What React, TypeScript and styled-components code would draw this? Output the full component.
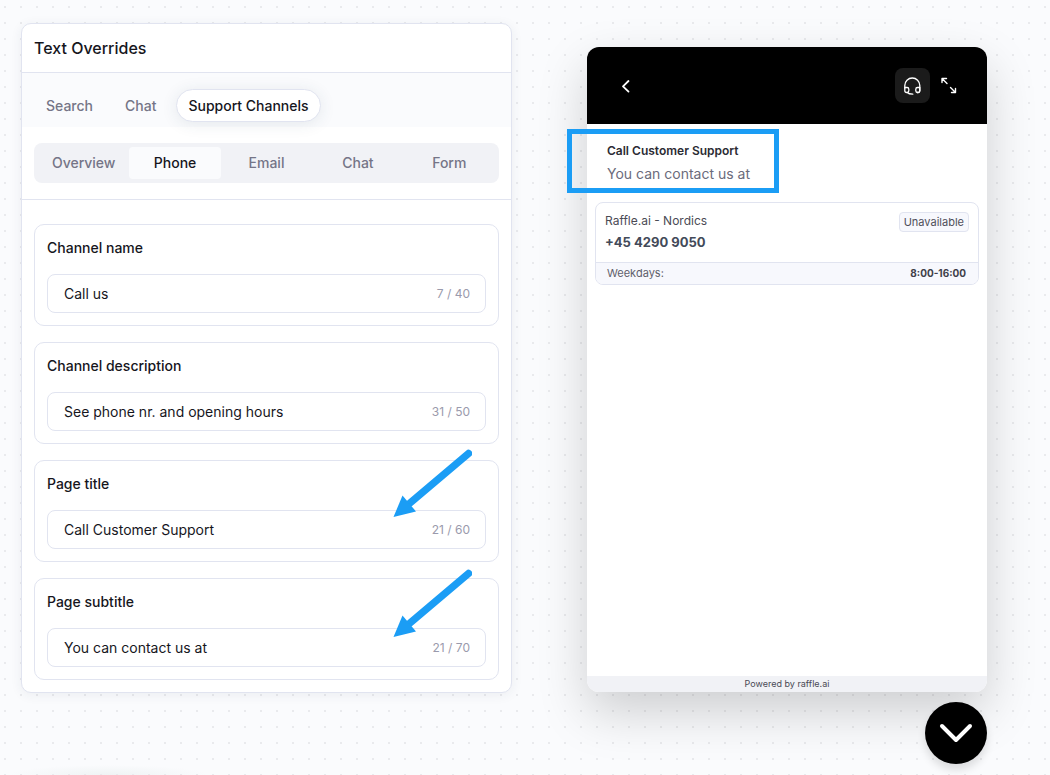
import React, { useState } from 'react';
import styled, { createGlobalStyle } from 'styled-components';

const color = {
  ink: '#16161d',
  muted: '#757587',
  faint: '#9a9aac',
  line: '#e1e4f0',
  canvas: '#fafbfd',
  track: '#f1f2f6',
  accent: '#1b9df5',
};

const GlobalStyle = createGlobalStyle`
  * { box-sizing: border-box; }
  body {
    margin: 0;
    font-family: Inter, "Liberation Sans", sans-serif;
    color: ${color.ink};
    background-color: ${color.canvas};
  }
  button, input { font: inherit; color: inherit; }
`;

const Page = styled.main`
  display: flex;
  align-items: flex-start;
  gap: 75px;
  min-height: 100vh;
  padding: 23px 63px 11px 21px;
  background:
    conic-gradient(from 270deg at 2px 2px, #e9eaed 90deg, transparent 0) 4px 6px / 16px 16px,
    radial-gradient(100px 10px at 108px 100%, #eff3f4, transparent),
    ${color.canvas};
`;

const Panel = styled.section`
  flex: 1 1 0;
  min-width: 0;
  background: #fff;
  border: 1px solid ${color.line};
  border-radius: 10px;
  box-shadow: 0 2px 12px rgba(40, 60, 80, 0.07);
`;

const PanelTitle = styled.h1`
  margin: 0;
  padding: 12px;
  font-size: 16px;
  line-height: 24px;
  font-weight: 500;
  border-bottom: 1px solid ${color.line};
`;

const PillBar = styled.nav`
  display: flex;
  padding: 16px 12px 5px;
  background: ${color.canvas};
`;

const Pill = styled.button<{ $active: boolean }>`
  height: 33px;
  padding: 0 11px;
  margin-right: 8px;
  border: 1px solid ${p => (p.$active ? color.line : 'transparent')};
  border-radius: 17px;
  background: ${p => (p.$active ? '#fff' : 'transparent')};
  box-shadow: ${p => (p.$active ? '0 2px 16px rgba(40, 70, 90, 0.1)' : 'none')};
  color: ${p => (p.$active ? color.ink : color.muted)};
  font-size: 14px;
  font-weight: 500;
`;

const SegmentArea = styled.div`
  padding: 16px 12px;
  border-bottom: 1px solid ${color.line};
`;

const Segments = styled.div`
  display: grid;
  grid-template-columns: repeat(5, 1fr);
  padding: 4px;
  border-radius: 8px;
  background: ${color.track};
`;

const Segment = styled.button<{ $active: boolean }>`
  height: 32px;
  padding: 0 0 2px;
  border: 0;
  border-radius: 4px;
  background: ${p => (p.$active ? color.canvas : 'transparent')};
  color: ${p => (p.$active ? color.ink : color.muted)};
  font-size: 14px;
  font-weight: 500;
`;

const Form = styled.form`
  display: grid;
  gap: 16px;
  padding: 24px 12px 12px;
`;

const Field = styled.div`
  position: relative;
  padding: 11px 12px 12px;
  border: 1px solid ${color.line};
  border-radius: 10px;
`;

const Label = styled.label`
  display: block;
  margin-bottom: 14px;
  font-size: 14px;
  line-height: 24px;
  font-weight: 500;
`;

const InputBox = styled.div`
  display: flex;
  align-items: center;
  height: 39px;
  padding: 0 15px 0 16px;
  border: 1px solid ${color.line};
  border-radius: 8px;
`;

const TextInput = styled.input`
  flex: 1;
  min-width: 0;
  padding: 0;
  border: 0;
  outline: 0;
  background: transparent;
  font-size: 14px;
`;

const Counter = styled.span`
  color: ${color.faint};
  font-size: 12px;
`;

const ArrowSvg = styled.svg<{ $top: number }>`
  position: absolute;
  right: 26px;
  top: ${p => p.$top}px;
  pointer-events: none;
`;

const Preview = styled.aside`
  display: flex;
  flex: 0 0 400px;
  flex-direction: column;
  align-items: flex-end;
  gap: 10px;
  padding-top: 24px;
`;

const Widget = styled.section`
  position: relative;
  display: flex;
  flex-direction: column;
  width: 100%;
  min-height: 645px;
  border-radius: 12px;
  background: #fff;
  box-shadow: 0 20px 50px rgba(0, 0, 0, 0.18);
`;

const WidgetBar = styled.header`
  display: flex;
  align-items: center;
  gap: 2px;
  height: 77px;
  padding: 0 20px;
  border-radius: 12px 12px 0 0;
  background: #000;
  color: #fff;
`;

const IconButton = styled.button<{ $filled?: boolean; $first?: boolean }>`
  display: grid;
  place-items: center;
  width: 35px;
  height: 35px;
  padding: 0;
  border: 0;
  border-radius: 8px;
  background: ${p => (p.$filled ? '#1b1b1b' : 'transparent')};
  color: #fff;
  margin-right: ${p => (p.$first ? 'auto' : '0')};
`;

const WidgetBody = styled.div`
  flex: 1;
  padding: 16px 8px;
`;

const Intro = styled.div`
  padding: 0 12px;
  margin-bottom: 16px;
`;

const IntroTitle = styled.h2`
  margin: 0;
  font-size: 12px;
  line-height: 22px;
  font-weight: 600;
  color: #2b2b33;
`;

const IntroText = styled.p`
  margin: 0;
  font-size: 14px;
  line-height: 24px;
  color: #6b6b7b;
`;

const Highlight = styled.div`
  position: absolute;
  left: -20px;
  top: 82px;
  width: 212px;
  height: 64px;
  border: 5px solid ${color.accent};
  pointer-events: none;
`;

const ContactCard = styled.article`
  border: 1px solid ${color.line};
  border-radius: 8px;
  overflow: hidden;
`;

const ContactMain = styled.div`
  display: flex;
  align-items: flex-start;
  justify-content: space-between;
  padding: 7px 9px 9px;
`;

const ContactName = styled.div`
  font-size: 12px;
  line-height: 21px;
  color: #4b4b55;
`;

const ContactNumber = styled.div`
  font-size: 13px;
  line-height: 22px;
  font-weight: 700;
  color: #434a59;
`;

const Badge = styled.span`
  margin-top: 2px;
  padding: 0 4px;
  border: 1px solid ${color.line};
  border-radius: 4px;
  background: #f7f8fd;
  color: #4f4f5a;
  font-size: 11px;
  line-height: 18px;
`;

const Hours = styled.div`
  display: flex;
  justify-content: space-between;
  padding: 0 12px 0 11px;
  border-top: 1px solid ${color.line};
  background: #f7f8fd;
  color: #5f5f6b;
  font-size: 11px;
  line-height: 21px;
`;

const HoursValue = styled.strong`
  font-size: 10px;
  font-weight: 700;
  color: #3f3f49;
`;

const WidgetFooter = styled.footer`
  height: 16px;
  border-radius: 0 0 12px 12px;
  background: ${color.track};
  color: #4a4a55;
  font-size: 9px;
  line-height: 16px;
  text-align: center;
`;

const Launcher = styled.button`
  position: relative;
  display: grid;
  place-items: center;
  width: 62px;
  height: 62px;
  padding: 0;
  border: 0;
  border-radius: 50%;
  background: #000;
  color: #fff;
  box-shadow: 0 6px 8px rgba(0, 0, 0, 0.12);
`;

const Arrow = ({ top }: { top: number }) => (
  <ArrowSvg $top={top} width="80" height="70" viewBox="0 0 80 70" aria-hidden="true">
    <path d="M76.5 4.5 18 54" stroke={color.accent} strokeWidth="7.4" strokeLinecap="round" />
    <path d="M1.5 68 10.500 46.500 24 62.500Z" fill={color.accent} />
  </ArrowSvg>
);

const fields = [
  { id: 'channel-name', label: 'Channel name', value: 'Call us', max: 40 },
  { id: 'channel-description', label: 'Channel description', value: 'See phone nr. and opening hours', max: 50 },
  { id: 'page-title', label: 'Page title', value: 'Call Customer Support', max: 60, arrow: -12 },
  { id: 'page-subtitle', label: 'Page subtitle', value: 'You can contact us at', max: 70, arrow: -10 },
];

export default function App() {
  const [values, setValues] = useState<Record<string, string>>(
    Object.fromEntries(fields.map(f => [f.id, f.value])),
  );
  const [section, setSection] = useState('Support Channels');
  const [channel, setChannel] = useState('Phone');

  return (
    <>
      <GlobalStyle />
      <Page>
        <Panel>
          <PanelTitle>Text Overrides</PanelTitle>
          <PillBar>
            {['Search', 'Chat', 'Support Channels'].map(name => (
              <Pill key={name} $active={name === section} onClick={() => setSection(name)}>{name}</Pill>
            ))}
          </PillBar>
          <SegmentArea>
            <Segments>
              {['Overview', 'Phone', 'Email', 'Chat', 'Form'].map(name => (
                <Segment key={name} $active={name === channel} onClick={() => setChannel(name)}>{name}</Segment>
              ))}
            </Segments>
          </SegmentArea>
          <Form>
            {fields.map(f => (
              <Field key={f.id}>
                <Label htmlFor={f.id}>{f.label}</Label>
                <InputBox>
                  <TextInput
                    id={f.id}
                    value={values[f.id]}
                    maxLength={f.max}
                    onChange={e => setValues({ ...values, [f.id]: e.target.value })}
                  />
                  <Counter>{values[f.id].length} / {f.max}</Counter>
                </InputBox>
                {f.arrow !== undefined && <Arrow top={f.arrow} />}
              </Field>
            ))}
          </Form>
        </Panel>

        <Preview>
          <Widget>
            <WidgetBar>
              <IconButton $first aria-label="Back">
                <svg width="16" height="16" viewBox="0 0 16 16" fill="none" stroke="currentColor" strokeWidth="1.8" strokeLinecap="round" strokeLinejoin="round">
                  <path d="M11.500 3 6 8.300l5.500 5.300" />
                </svg>
              </IconButton>
              <IconButton $filled aria-label="Support">
                <svg width="18" height="18" viewBox="0 0 18 18" fill="none" stroke="currentColor" strokeWidth="1.3" strokeLinecap="round" strokeLinejoin="round">
                  <path d="M.8 11V8.500a7.500 7.500 0 0 1 15 0V14c0 .9-.6 1.500-1.500 1.500h-1.200" />
                  <path d="M.8 10.500h2.300c1 0 1.700.7 1.700 1.700v1.600c0 1-.7 1.700-1.700 1.700h-.6c-1 0-1.700-.7-1.700-1.700z" />
                  <path d="M15.800 10.500h-2.300c-1 0-1.700.7-1.700 1.700v1.600c0 1 .7 1.700 1.700 1.700h.6c1 0 1.700-.7 1.700-1.700z" />
                  <path d="M3.300 15.500c1 1.200 2.500 1.700 5.500 1.700" />
                </svg>
              </IconButton>
              <IconButton aria-label="Expand">
                <svg width="18" height="18" viewBox="0 0 18 18" fill="none" stroke="currentColor" strokeWidth="1.4" strokeLinecap="round" strokeLinejoin="round">
                  <path d="M6 6.500 1 1.500M1 5.500v-4h4.500M9.500 10.500l5 5M14.500 11.500v4h-4" />
                </svg>
              </IconButton>
            </WidgetBar>
            <WidgetBody>
              <Intro>
                <IntroTitle>{values['page-title']}</IntroTitle>
                <IntroText>{values['page-subtitle']}</IntroText>
              </Intro>
              <ContactCard>
                <ContactMain>
                  <div>
                    <ContactName>Raffle.ai - Nordics</ContactName>
                    <ContactNumber>+45 4290 9050</ContactNumber>
                  </div>
                  <Badge>Unavailable</Badge>
                </ContactMain>
                <Hours>
                  <span>Weekdays:</span>
                  <HoursValue>8:00-16:00</HoursValue>
                </Hours>
              </ContactCard>
            </WidgetBody>
            <WidgetFooter>Powered by raffle.ai</WidgetFooter>
            <Highlight />
          </Widget>
          <Launcher aria-label="Close preview">
            <svg width="34" height="22" viewBox="0 0 34 22" fill="none" stroke="currentColor" strokeWidth="4" strokeLinecap="round" strokeLinejoin="round">
              <path d="M3 4 17 18 31 4" />
            </svg>
          </Launcher>
        </Preview>
      </Page>
    </>
  );
}
